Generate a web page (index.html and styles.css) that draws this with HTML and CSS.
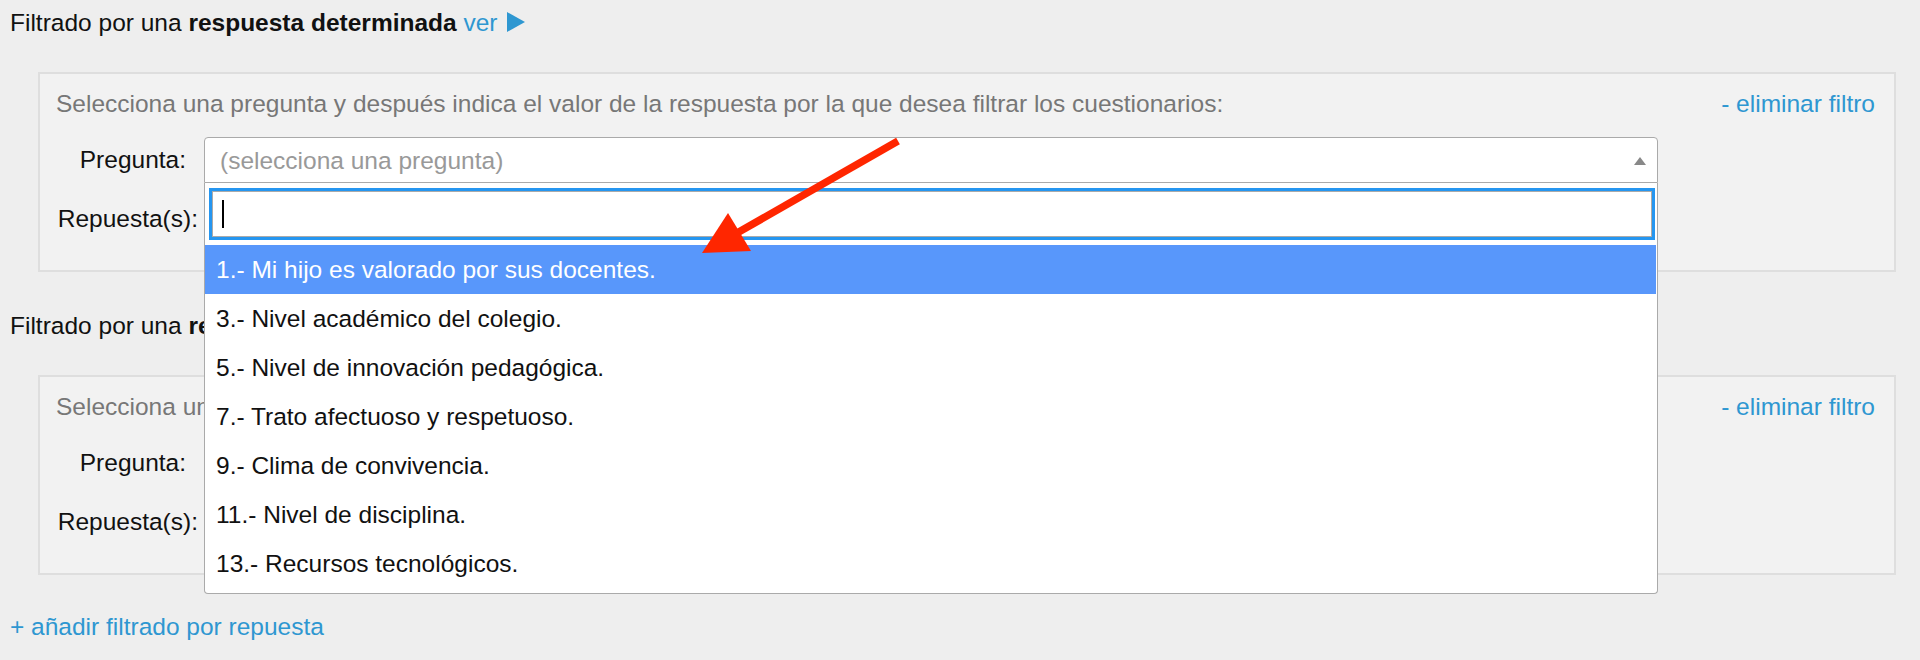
FILE: index.html
```html
<!DOCTYPE html>
<html lang="es">
<head>
  <meta charset="UTF-8" />
  <meta name="viewport" content="width=device-width, initial-scale=1.0"/>
  <title>Filtrado por respuesta</title>
  <link rel="stylesheet" href="styles.css">
</head>
<body>

  <div class="page">
    <!-- Filter 1: dropdown open -->
    <div class="filter">
      <p class="filter-title">Filtrado por una <b>respuesta determinada</b> <a class="link" href="#">ver</a><svg class="ver-icon" width="18" height="20" viewBox="0 0 18 20"><polygon points="0,0 18,10 0,20" fill="#2e97d1"/></svg></p>
      <div class="filter-box">
        <div class="filter-head">
          <span class="hint">Selecciona una pregunta y después indica el valor de la respuesta por la que desea filtrar los cuestionarios:</span>
          <a class="link" href="#">- eliminar filtro</a>
        </div>
        <div class="filter-form">
          <label class="form-label wide-pad">Pregunta:</label>
          <div class="select open">
            <div class="select-head">
              <span class="placeholder">(selecciona una pregunta)</span>
              <span class="select-arrow"></span>
            </div>
            <div class="dropdown">
              <div class="search-wrap">
                <div class="search-field"><span class="caret"></span></div>
              </div>
              <ul class="results">
                <li class="highlighted">1.- Mi hijo es valorado por sus docentes.</li>
                <li>3.- Nivel académico del colegio.</li>
                <li>5.- Nivel de innovación pedagógica.</li>
                <li>7.- Trato afectuoso y respetuoso.</li>
                <li>9.- Clima de convivencia.</li>
                <li>11.- Nivel de disciplina.</li>
                <li>13.- Recursos tecnológicos.</li>
              </ul>
            </div>
          </div>
          <label class="form-label">Repuesta(s):</label>
          <div class="multi-input"></div>
        </div>
      </div>
    </div>

    <!-- Filter 2 -->
    <div class="filter">
      <p class="filter-title">Filtrado por una <b>respuesta determinada</b> <a class="link" href="#">ver</a><svg class="ver-icon" width="18" height="20" viewBox="0 0 18 20"><polygon points="0,0 18,10 0,20" fill="#2e97d1"/></svg></p>
      <div class="filter-box">
        <div class="filter-head">
          <span class="hint">Selecciona una pregunta y después indica el valor de la respuesta por la que desea filtrar los cuestionarios:</span>
          <a class="link" href="#">- eliminar filtro</a>
        </div>
        <div class="filter-form">
          <label class="form-label wide-pad">Pregunta:</label>
          <div class="select">
            <div class="select-head">
              <span class="placeholder">(selecciona una pregunta)</span>
              <span class="select-arrow"></span>
            </div>
          </div>
          <label class="form-label">Repuesta(s):</label>
          <div class="multi-input"></div>
        </div>
      </div>
    </div>

    <a class="link add-link" href="#">+ añadir filtrado por repuesta</a>
  </div>

  <!-- screenshot annotation -->
  <svg class="annotation" width="1920" height="660" viewBox="0 0 1920 660">
    <line x1="898" y1="141" x2="737" y2="233" stroke="#ff2600" stroke-width="7.5"/>
    <polygon points="702,253 728,213 751,251" fill="#ff2600"/>
  </svg>

</body>
</html>
```

FILE: styles.css
```css
* { box-sizing: border-box; }
body { margin: 0; background: #eeeeee; font-family: "Liberation Sans", Arial, sans-serif; font-size: 24.5px; color: #111; }
.page { padding: 9px 10px 0; }
.filter + .filter { margin-top: 40px; }
.filter-title { margin: 0; line-height: 28px; }
.link { color: #2e97d1; text-decoration: none; }
.ver-icon { margin-left: 9px; vertical-align: -1px; }

.filter-box { margin: 35px 14px 0 28px; padding: 16px 19px 28px 16px; background: #f2f2f2; border: 2px solid #dedede; }
.filter-head { display: flex; justify-content: space-between; line-height: 28px; }
.hint { color: #777; }
.filter-form { display: grid; grid-template-columns: 148px 1454px; grid-auto-rows: 46px; row-gap: 13px; margin-top: 19px; align-items: center; }
.form-label { text-align: right; padding-right: 6px; line-height: 28px; }
.form-label.wide-pad { padding-right: 18px; }

.select { position: relative; height: 46px; }
.select-head { display: flex; align-items: center; justify-content: space-between; height: 46px; padding: 2px 11px 0 15px; background: #fff; border: 1px solid #aaa; border-radius: 4px; }
.select.open .select-head { border-radius: 4px 4px 0 0; }
.placeholder { color: #999; line-height: 28px; }
.select-arrow { width: 0; height: 0; border-left: 6.5px solid transparent; border-right: 6.5px solid transparent; border-top: 8px solid #888; }
.select.open .select-arrow { border-top: 0; border-bottom: 8px solid #888; }

.dropdown { position: absolute; top: 46px; left: 0; right: 0; z-index: 10; background: #fff; border: 1px solid #aaa; border-top: 0; border-radius: 0 0 4px 4px; padding-bottom: 5px; }
.search-wrap { padding: 8px 5px 8px 7px; }
.search-field { display: flex; align-items: center; height: 46px; padding-left: 9px; background: #fff; border: 1px solid #aaa; box-shadow: 0 0 0 3px #2596f0; }
.caret { width: 2px; height: 28px; background: #000; }
.results { list-style: none; margin: 0; padding: 0 1px 0 0; }
.results li { padding: 10px 11px; line-height: 29px; }
.results li.highlighted { background: #5897fb; color: #fff; }

.multi-input { height: 46px; background: #fff; border: 1px solid #aaa; border-radius: 4px; }
.add-link { display: inline-block; margin-top: 38px; line-height: 28px; }

.annotation { position: absolute; top: 0; left: 0; pointer-events: none; z-index: 20; }
```
